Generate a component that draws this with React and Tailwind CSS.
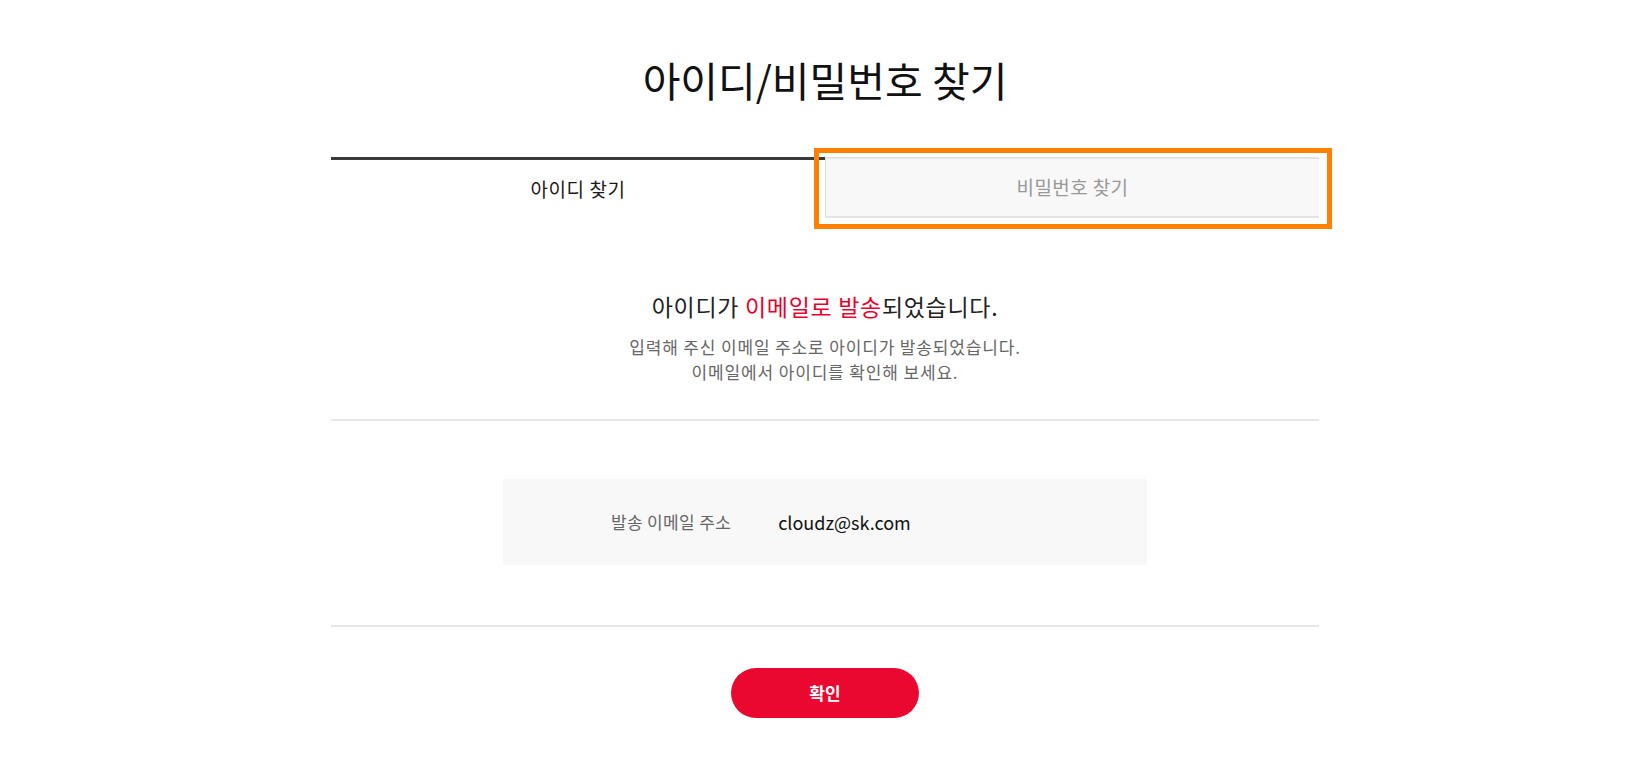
import React from "react";

export default function App() {
  return (
    <div className="min-h-[765px] w-full bg-white font-['Noto_Sans_CJK_KR','Noto_Sans',sans-serif]">
      <div className="mx-auto w-[988px] pt-[51px]">
        <h1 className="text-center text-[41px] leading-[56px] font-normal text-[#111]">
          아이디/비밀번호 찾기
        </h1>

        <div className="mt-[50px] flex">
          <div className="flex h-[61px] w-1/2 items-center justify-center border-t-[3px] border-[#3a3a3a] text-[19px] tracking-[0.03em] text-[#1a1a1a]">
            아이디 찾기
          </div>
          <div className="relative flex h-[61px] w-1/2 items-center justify-center border-t-2 border-b-2 border-l border-t-[#e4e4e4] border-b-[#e4e4e4] border-l-[#dcdcdc] bg-[#f8f8f8] text-[19px] tracking-[0.02em] text-[#999]">
            비밀번호 찾기
            <div className="pointer-events-none absolute left-[-12px] top-[-11px] h-[81px] w-[518px] border-[5px] border-[#ff7f00]" />
          </div>
        </div>

        <div className="mt-[72px] text-center">
          <p className="text-[23px] leading-[32px] tracking-[0.03em] text-[#222]">
            아이디가 <span className="text-[#ea002c]">이메일로 발송</span>되었습니다.
          </p>
          <p className="mt-[12px] text-[17px] leading-[25px] tracking-[0.05em] text-[#666]">
            입력해 주신 이메일 주소로 아이디가 발송되었습니다.
            <br />
            이메일에서 아이디를 확인해 보세요.
          </p>
        </div>

        <div className="mt-[35px] h-[2px] bg-[#e6e6e6]" />

        <div className="mx-auto mt-[58px] flex h-[86px] w-[644px] items-center bg-[#f8f8f8] pl-[108px]">
          <span className="text-[17px] tracking-[0.02em] text-[#666]">발송 이메일 주소</span>
          <span className="ml-[47px] text-[18px] text-[#111]">cloudz@sk.com</span>
        </div>

        <div className="mt-[60px] h-[2px] bg-[#e6e6e6]" />

        <div className="mt-[41px] flex justify-center">
          <button className="h-[50px] w-[188px] rounded-full bg-[#ea0730] text-[17px] font-bold text-white">
            확인
          </button>
        </div>
      </div>
    </div>
  );
}
